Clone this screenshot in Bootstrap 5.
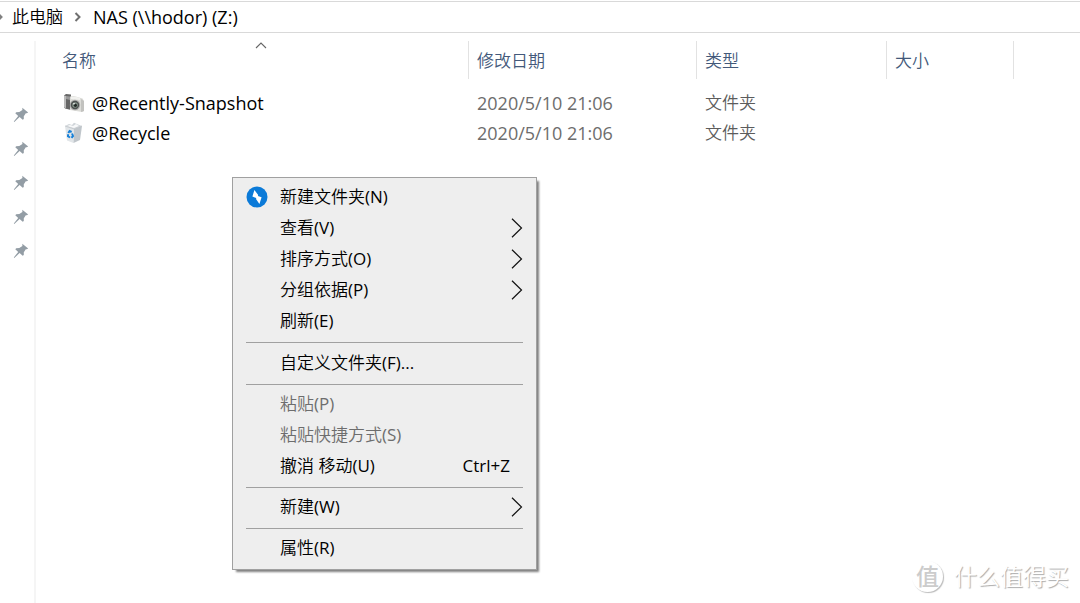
<!DOCTYPE html>
<html lang="zh-CN">
<head>
<meta charset="utf-8">
<meta name="viewport" content="width=device-width, initial-scale=1">
<title>NAS (\\hodor) (Z:)</title>
<link href="https://cdn.jsdelivr.net/npm/bootstrap@5.3.0/dist/css/bootstrap.min.css" rel="stylesheet">
<style>
  body { font-family: "Noto Sans", "Noto Sans CJK SC", sans-serif; font-size: 17px; line-height: 24px; font-weight: 350; color: #000; background: #fff; }
  .compact-text { font-family: "Open Sans", "Noto Sans CJK SC", sans-serif; }
  .address-bar { height: 32px; margin-top: 1px; border-top: 1px solid #d9d9d9; border-bottom: 1px solid #d9d9d9; }
  .address-bar a { color: #000; text-decoration: none; }
  .latin-text { font-family: "Open Sans", sans-serif; font-size: 18px; line-height: 22px; font-weight: 400; }
  .access-key { font-weight: 400; }
  .quick-pane { width: 36px; padding: 57px 0 0 13px; border-right: 2px solid #f5f5f5; }
  .pin-btn { display: flex; align-items: center; height: 34px; padding: 0; border: 0; background: none; }
  .file-table { table-layout: fixed; width: 978px; border-collapse: separate; border-spacing: 0; }
  .file-table th { position: relative; height: 38px; padding: 2px 0 0 8px; border-right: 1px solid #e2e2e2; }
  .file-table th:first-child, .file-table td:first-child { padding-left: 26px; }
  .file-table th button { border: 0; padding: 0; background: none; color: #43597a; font-weight: 350; }
  .file-table tbody::before { content: ""; display: block; height: 9px; }
  .file-table td { height: 30px; padding: 0 0 0 8px; color: #5c5c5c; }
  .file-table td.latin-text { color: #6d6d6d; }
  .file-table a { color: #000; text-decoration: none; }
  .sort-mark { position: absolute; top: 0; left: 219px; }
  .shell-menu { display: block; position: absolute; left: 232px; top: 177px; width: 305px; padding: 4px 0 5px; border: 1px solid #a0a0a0; border-radius: 0; background: #eee; box-shadow: 3px 3px 2px -1px #808080; font-size: 17px; }
  .shell-menu .dropdown-item { display: flex; align-items: center; height: 31px; padding: 0 13px 1px; color: #000; font-weight: 350; }
  .shell-menu .dropdown-item:disabled { color: #6d6d6d; }
  .shell-menu .dropdown-divider { margin: 5px 13px 4px; border-top: 1px solid #a0a0a0; opacity: 1; }
  .shell-menu .wide-divider { margin-bottom: 5px; }
  .item-icon { display: flex; width: 34px; flex: none; }
  .shortcut { padding-right: 13px; }
  .site-mark { position: absolute; right: 11px; bottom: 10px; gap: 11px; color: #fff; font-size: 23px; line-height: 34px; text-shadow: 1px 1px 1px #aaa; }
  .site-seal { width: 31px; height: 31px; border-radius: 50%; box-shadow: 1px 1px 1px #bbb; font-size: 23px; line-height: 30px; font-weight: 500; color: #ccc; text-shadow: none; }
</style>
</head>
<body>
<svg class="d-none" xmlns="http://www.w3.org/2000/svg">
  <symbol id="pin" viewBox="0 0 16 16"><path fill="#939da5" d="M9.3.8 15.2 5.5 13.7 6.2 12.8 6.2 10.8 9.2 10.8 12 9.7 12.8 6.6 10.1 1.3 14.9.8 14.4 5.2 8.9 2.3 6.2 3.2 5.2 6.3 5.1 9.4 3Z"/></symbol>
  <symbol id="crumb" viewBox="0 0 8 10"><path d="m1.5 1 4 4-4 4" fill="none" stroke="#707070" stroke-width="2"/></symbol>
  <symbol id="submenu" viewBox="0 0 12 20"><path d="m1 .8 9.5 9.2L1 19.2" fill="none" stroke="#111" stroke-width="1.2"/></symbol>
</svg>
<div class="d-flex flex-column min-vh-100 position-relative overflow-hidden">
  <nav class="address-bar d-flex align-items-center flex-shrink-0" aria-label="地址">
    <svg width="4" height="10" viewBox="4 0 4 10" aria-hidden="true"><path d="m1.5 1 4 4-4 4" fill="none" stroke="#808080" stroke-width="2"/></svg>
    <a href="#" class="ms-2">此电脑</a>
    <svg class="mx-2" width="14" height="10" aria-hidden="true"><use href="#crumb"/></svg>
    <a href="#" class="latin-text">NAS (\\hodor) (Z:)</a>
  </nav>
  <div class="d-flex flex-grow-1 pt-2">
    <aside class="quick-pane flex-shrink-0">
      <button class="pin-btn" aria-label="固定 1"><svg width="16" height="16"><use href="#pin"/></svg></button>
      <button class="pin-btn" aria-label="固定 2"><svg width="16" height="16"><use href="#pin"/></svg></button>
      <button class="pin-btn" aria-label="固定 3"><svg width="16" height="16"><use href="#pin"/></svg></button>
      <button class="pin-btn" aria-label="固定 4"><svg width="16" height="16"><use href="#pin"/></svg></button>
      <button class="pin-btn" aria-label="固定 5"><svg width="16" height="16"><use href="#pin"/></svg></button>
    </aside>
    <main class="flex-grow-1">
      <table class="file-table">
        <colgroup><col style="width:433px"><col style="width:228px"><col style="width:190px"><col style="width:127px"></colgroup>
        <thead>
          <tr>
            <th scope="col"><button>名称</button><svg class="sort-mark" width="12" height="8" viewBox="0 0 12 8" aria-hidden="true"><path d="m1 7 5-5 5 5" fill="none" stroke="#666" stroke-width="1.1"/></svg></th>
            <th scope="col"><button>修改日期</button></th>
            <th scope="col"><button>类型</button></th>
            <th scope="col"><button>大小</button></th>
          </tr>
        </thead>
        <tbody>
          <tr>
            <td class="latin-text"><a href="#" class="d-flex align-items-center gap-2">
              <svg width="22" height="20" viewBox="0 0 22 20" aria-hidden="true">
                <path d="M2 2.5 4 1 9 1.5V17L3 15.5 2 14Z" fill="#666"/><path d="M2 2.5 4 3V15.5L2 14Z" fill="#bbb"/><path d="M4 3 8 3.5V7L4 6Z" fill="#999"/>
                <path d="M8 3.5 12 3 20.5 5.5 22 8V18L20 19 8 17Z" fill="#dcdcd8"/><path d="M19 6 22 8V18L19 19Z" fill="#c2c2bf"/><path d="M9 4 13 3.5 18 5 18 7 9 6Z" fill="#f2f2ef"/>
                <circle cx="13" cy="12" r="5.2" fill="#aaa"/><circle cx="13" cy="12" r="4.2" fill="#4c504f"/><circle cx="13" cy="12" r="2.8" fill="#829087"/><circle cx="13.4" cy="12.3" r="1.6" fill="#202725"/><circle cx="12" cy="10.8" r=".8" fill="#fff"/>
              </svg>@Recently-Snapshot</a></td>
            <td class="latin-text">2020/5/10 21:06</td><td>文件夹</td><td></td>
          </tr>
          <tr>
            <td class="latin-text"><a href="#" class="d-flex align-items-center gap-2">
              <svg width="22" height="22" viewBox="0 0 22 22" aria-hidden="true">
                <path d="M3 4 12 7 11.5 21 5 18.5Z" fill="#e1e5e8"/><path d="M12 7 20 4 18 18 11.5 21Z" fill="#c0c6cb"/>
                <path d="M3 4 7 2 10 3 12 .8 16 2.5 20 4 12 7Z" fill="#d0d5d9"/><path d="m5 4 3-1 3 1 3-2 3 2-5 2Z" fill="#f8f9fa"/><path d="m3 4 9 3 8-3" fill="none" stroke="#b7bcc1" stroke-width=".6"/>
                <g fill="none" stroke="#1680d8" stroke-width="2"><path d="m6.3 11 1.3-2 2 1"/><path d="m10 11.5 1 2.5-1.5 1.8"/><path d="m8 15.5-2-1.2.1-2"/></g>
              </svg>@Recycle</a></td>
            <td class="latin-text">2020/5/10 21:06</td><td>文件夹</td><td></td>
          </tr>
        </tbody>
      </table>
    </main>
  </div>

  <ul class="dropdown-menu shell-menu compact-text">
    <li><button class="dropdown-item"><span class="item-icon"><svg width="22" height="22" viewBox="0 0 22 22" aria-hidden="true"><circle cx="11" cy="11" r="10.5" fill="#0b7ad8"/><path d="M8.4 4 12.2 9 11.9 9.9 15.6 11.3 13.4 18 10 12.9 10.3 12 6.4 10.6Z" fill="#fff"/></svg></span>新建文件夹<span class="access-key">(N)</span></button></li>
    <li><button class="dropdown-item"><span class="item-icon"></span>查看<span class="access-key">(V)</span><svg class="ms-auto" width="12" height="20"><use href="#submenu"/></svg></button></li>
    <li><button class="dropdown-item"><span class="item-icon"></span>排序方式<span class="access-key">(O)</span><svg class="ms-auto" width="12" height="20"><use href="#submenu"/></svg></button></li>
    <li><button class="dropdown-item"><span class="item-icon"></span>分组依据<span class="access-key">(P)</span><svg class="ms-auto" width="12" height="20"><use href="#submenu"/></svg></button></li>
    <li><button class="dropdown-item"><span class="item-icon"></span>刷新<span class="access-key">(E)</span></button></li>
    <li><hr class="dropdown-divider wide-divider"></li>
    <li><button class="dropdown-item"><span class="item-icon"></span>自定义文件夹<span class="access-key">(F)...</span></button></li>
    <li><hr class="dropdown-divider"></li>
    <li><button class="dropdown-item" disabled><span class="item-icon"></span>粘贴<span class="access-key">(P)</span></button></li>
    <li><button class="dropdown-item" disabled><span class="item-icon"></span>粘贴快捷方式<span class="access-key">(S)</span></button></li>
    <li><button class="dropdown-item"><span class="item-icon"></span>撤消 移动<span class="access-key">(U)</span><span class="ms-auto access-key shortcut">Ctrl+Z</span></button></li>
    <li><hr class="dropdown-divider"></li>
    <li><button class="dropdown-item"><span class="item-icon"></span>新建<span class="access-key">(W)</span><svg class="ms-auto" width="12" height="20"><use href="#submenu"/></svg></button></li>
    <li><hr class="dropdown-divider"></li>
    <li><button class="dropdown-item"><span class="item-icon"></span>属性<span class="access-key">(R)</span></button></li>
  </ul>

  <div class="site-mark d-flex align-items-center"><span class="site-seal text-center">值</span><span>什么值得买</span></div>
</div>
<script src="https://cdn.jsdelivr.net/npm/bootstrap@5.3.0/dist/js/bootstrap.bundle.min.js"></script>
</body>
</html>
